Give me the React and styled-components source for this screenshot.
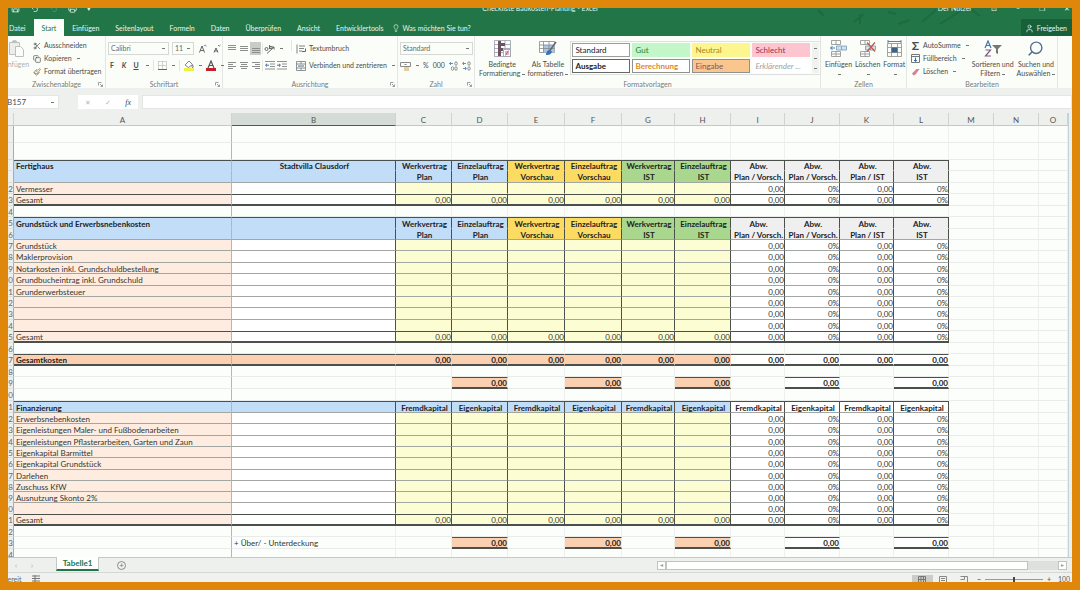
import styled, { createGlobalStyle, css } from 'styled-components'
import { Scissors, Copy, Paintbrush, Search, Lightbulb, User, Save, Undo2, Printer } from 'lucide-react'

const GlobalStyle = createGlobalStyle`
    * { box-sizing: border-box; }
    body { margin: 0; background: #df870a; font-family: Lato, "Open Sans", sans-serif; font-size: 7px; line-height: 9px; color: #4a4d4a; }
    button, input, select { font: inherit; color: inherit; }
`;

const Frame = styled.div`
    height: 100vh;
    padding: 8px;
`;

const Window = styled.div`
    height: 100%;
    display: flex;
    flex-direction: column;
    overflow: hidden;
    background: #edf0ec;
`;

// title bar + tabs

const Top = styled.header`
    position: relative;
    height: 28px;
    flex: none;
    background: #217547;
    color: #eaf5ee;
`;

const Doodle = styled.svg`
    position: absolute;
    right: 60px;
    top: 0;
    width: 200px;
    height: 20px;
    opacity: 0.25;
`;

const TitleBar = styled.div`
    position: relative;
    display: grid;
    grid-template-columns: 1fr 1fr 1fr;
    align-items: center;
    height: 20px;
    margin-top: -10px;
    svg { display: block; }
`;

const Quick = styled.div`
    display: flex;
    gap: 10px;
    padding-left: 3px;
`;

const Title = styled.div`
    text-align: center;
`;

const WinButtons = styled.div`
    display: flex;
    justify-content: flex-end;
    align-items: center;
    gap: 19px;
    padding-right: 2px;
`;

const PlainButton = styled.button`
    display: flex;
    align-items: center;
    gap: 3px;
    padding: 0;
    border: 0;
    background: none;
    white-space: nowrap;
    svg { display: block; flex: none; }
`;

const Tabs = styled.nav`
    position: relative;
    display: flex;
    height: 17px;
    margin-top: 1px;
`;

const Tab = styled.button`
    border: 0;
    padding: 1px 8px 0;
    background: ${({ $active }) => ($active ? '#fbfdf9' : 'none')};
    color: ${({ $active }) => ($active ? '#217547' : '#eaf5ee')};
    &:first-child { padding: 1px 8px 0 1px; }
`;

const Tell = styled(PlainButton)`
    padding-top: 1px;
`;

const Share = styled(PlainButton)`
    margin-left: auto;
    padding: 1px 5px 0 4px;
    background: #17603a;
`;

// ribbon

const Ribbon = styled.div`
    display: grid;
    grid-template-columns: 98px 117px 175px 77px 346px 86px 151px 1fr;
    height: 52px;
    flex: none;
    background: #fbfdf9;
`;

const Group = styled.section`
    display: flex;
    flex-direction: column;
    padding-top: 4px;
    border-right: 1px solid #e3e6e3;
    min-width: 0;
`;

const GroupBody = styled.div`
    flex: 1;
    display: flex;
    gap: ${({ $gap }) => $gap || 4}px;
    padding-left: ${({ $left }) => $left || 0}px;
`;

const GroupLabel = styled.div`
    position: relative;
    height: 8px;
    text-align: center;
    color: #777b78;
`;

const Launcher = styled.svg`
    position: absolute;
    right: 2px;
    top: 2px;
`;

const Stack = styled.div`
    display: flex;
    flex-direction: column;
    gap: 4px;
    padding-top: ${({ $top }) => $top || 0}px;
`;

const Line = styled.div`
    display: flex;
    align-items: center;
    height: 13px;
    gap: ${({ $gap }) => $gap || 5}px;
`;

const Split = styled.span`
    width: 1px;
    height: 11px;
    background: #e3e6e3;
`;

const BigButton = styled.button`
    display: flex;
    flex-direction: column;
    align-items: center;
    justify-content: flex-start;
    gap: 3px;
    padding: 0;
    border: 0;
    background: none;
    white-space: nowrap;
    opacity: ${({ $dim }) => ($dim ? 0.45 : 1)};
`;

const Paste = styled(BigButton)`
    width: 27px;
    margin-left: -6px;
`;

const Select = styled.select`
    appearance: none;
    width: ${({ $w }) => $w}px;
    height: 13px;
    padding: 0 2px;
    border: 1px solid #d5d8d5;
    border-radius: 0;
    background: #fbfdf9 linear-gradient(#777, #777) no-repeat right 3px center / 3px 1px;
    color: #666a67;
`;

const Letter = styled(PlainButton)`
    width: 8px;
    justify-content: center;
    font-weight: 700;
    font-style: ${({ $italic }) => ($italic ? 'italic' : 'normal')};
    text-decoration: ${({ $under }) => ($under ? 'underline' : 'none')};
`;

const IconSlot = styled.button`
    display: grid;
    place-items: center;
    width: 11px;
    height: 13px;
    padding: 0;
    border: 0;
    background: ${({ $on }) => ($on ? '#c9ccc9' : 'none')};
`;

const Caret = styled.i`
    display: inline-block;
    flex: none;
    width: 3px;
    height: 1px;
    margin-left: 2px;
    vertical-align: middle;
    background: #777;
`;

const Sigma = styled.b`
    width: 9px;
    font-size: 12px;
    line-height: 9px;
`;

const Gallery = styled.div`
    display: grid;
    grid-template-columns: repeat(4, 58px) 7px;
    grid-template-rows: 14px 14px;
    gap: 2px;
    height: 34px;
    padding: 1px;
    border: 1px solid #dde0dd;
    margin-top: 1px;
`;

const Style = styled.button`
    padding: 0 2px;
    text-align: left;
    font-size: 8px;
    border: 1px solid ${({ $line }) => $line || 'transparent'};
    background: ${({ $bg }) => $bg || '#fff'};
    color: ${({ $ink }) => $ink || '#222'};
    font-weight: ${({ $bold }) => ($bold ? 700 : 400)};
    font-style: ${({ $italic }) => ($italic ? 'italic' : 'normal')};
`;

const GalleryScroll = styled.div`
    grid-column: 5;
    grid-row: 1 / 3;
    display: grid;
    place-items: center;
    background: #f0f2ef;
    i { margin: 0; }
`;

// formula bar

const FormulaBar = styled.div`
    display: flex;
    height: 25px;
    padding: 7px 0 4px;
    flex: none;
    background: #edf0ec;
`;

const NameBox = styled.input`
    width: 54px;
    margin-left: -3px;
    padding: 0 1px;
    border: 1px solid #e3e6e3;
    background: #fff linear-gradient(#777, #777) no-repeat right 4px center / 3px 1px;
    font-size: 8px;
`;

const FxButtons = styled.div`
    display: flex;
    align-items: center;
    justify-content: space-around;
    width: 60px;
    margin: 0 4px 0 19px;
    background: #fff;
    color: #b5b8b5;
    em { font-family: "Liberation Serif", serif; font-size: 8px; color: #444; }
`;

const FormulaInput = styled.input`
    flex: 1;
    min-width: 0;
    border: 1px solid #e3e6e3;
    background: #fff;
`;

// sheet

const Sheet = styled.main`
    flex: 1;
    min-height: 0;
    overflow: hidden;
    margin-right: 3px;
    border-right: 1px solid #bcd5de;
    background: #fcfefb;
`;

const Table = styled.table`
    width: 100%;
    table-layout: fixed;
    border-collapse: separate;
    border-spacing: 0;
    font-size: 8px;
    line-height: 7px;
    color: #333633;
`;

const ColHead = styled.th`
    height: 13px;
    padding: 2px 0 0;
    font-weight: 400;
    color: #555;
    background: ${({ $on }) => ($on ? '#d5dbd5' : '#edf0ec')};
    border-right: 1px solid #cfd3cf;
    border-bottom: 1px solid ${({ $on }) => ($on ? '#217547' : '#c5c9c5')};
`;

const RowHead = styled.th`
    padding: 2px 0 0;
    font-weight: 400;
    text-align: right;
    color: #666;
    background: #edf0ec;
    border-right: 1px solid #a9ada9;
    border-bottom: 1px solid #dde0dd;
`;

const Cell = styled.td`
    padding: 2px 0 0 2px;
    white-space: nowrap;
    text-align: ${({ $align }) => $align || 'left'};
    font-weight: ${({ $bold }) => ($bold ? 700 : 400)};
    color: ${({ $bold }) => ($bold ? '#1c221f' : 'inherit')};
    background: ${({ $bg }) => $bg || 'transparent'};
    border-right: 1px solid ${({ $right }) => $right || '#edf0ec'};
    ${({ $top }) => $top && css`border-top: 1px solid ${$top};`}
    border-bottom: ${({ $thick }) => ($thick ? '2px' : '1px')} solid ${({ $bottom }) => $bottom || '#e9ece8'};
`;

// bottom bars

const SheetBar = styled.footer`
    display: flex;
    align-items: center;
    height: 16px;
    flex: none;
    border-top: 1px solid #c5c9c5;
    border-bottom: 1px solid #d5d8d5;
    background: #edf0ec;
    color: #9a9e9a;
    padding: 0 5px 0 7px;
`;

const Arrow = styled.button`
    width: 16px;
    padding: 0;
    border: 0;
    background: none;
    text-align: left;
`;

const SheetTab = styled.button`
    align-self: stretch;
    width: 43px;
    margin: -1px 18px 1px 9px;
    padding: 0;
    border: 1px solid #c5c9c5;
    border-top: 0;
    border-bottom: 2px solid #217547;
    background: #fff;
    color: #217547;
    font-weight: 700;
    font-size: 8px;
`;

const AddButton = styled.button`
    width: 9px;
    height: 9px;
    padding: 0;
    border: 1px solid #8a8e8a;
    border-radius: 50%;
    background: none;
    line-height: 6px;
    color: #666;
`;

const Scroller = styled.div`
    display: flex;
    align-items: stretch;
    width: 410px;
    height: 9px;
    margin-left: auto;
    background: #dde0dd;
`;

const ScrollButton = styled.button`
    width: 9px;
    padding: 0;
    border: 1px solid #c0c4c0;
    background: #fff;
    font-size: 6px;
    line-height: 6px;
`;

const Thumb = styled.div`
    flex: 1;
    margin-right: 30px;
    border: 1px solid #c0c4c0;
    background: #fff;
`;

const Status = styled.div`
    display: flex;
    align-items: center;
    height: 9px;
    flex: none;
    padding-top: 3px;
    background: #f0f2ef;
    color: #666;
    overflow: hidden;
    white-space: nowrap;
`;

const StatusText = styled.span`
    margin: 0 11px 0 -5px;
`;

const Views = styled.div`
    display: flex;
    margin-left: auto;
`;

const ViewButton = styled.button`
    display: grid;
    place-items: center;
    width: 21px;
    height: 8px;
    padding: 0;
    border: 0;
    background: ${({ $on }) => ($on ? '#c9ccc9' : 'none')};
`;

const Zoom = styled.label`
    display: flex;
    align-items: center;
    gap: 4px;
    margin-left: 2px;
    font-weight: 700;
    input {
        appearance: none;
        width: 58px;
        height: 5px;
        margin: 0;
        background: linear-gradient(#999, #999) no-repeat center / 100% 1px;
    }
    input::-webkit-slider-thumb {
        appearance: none;
        width: 2px;
        height: 5px;
        background: #444;
    }
    span { margin-left: 3px; font-weight: 400; width: 14px; }
`;

const Bars = ({ rows = [9, 6, 9], align = 'left', y = 2 }) => (
    <svg width="10" height="10">
        {rows.map((w, i) => (
            <rect key={i} x={align === 'left' ? 1 : align === 'right' ? 9 - w : (10 - w) / 2} y={y + i * 2} width={w} height="1" fill="#8b8f8c" />
        ))}
    </svg>
);

const Indent = ({ flip }) => (
    <svg width="10" height="9" viewBox="0 0 10 9" fill="none" stroke="#777">
        <path d="M0 .5h10M5 3h5M5 5.500h5M0 8h10" strokeWidth=".8" />
        <path d={flip ? 'M0 4.200h3M2 2.800l1.500 1.400L2 5.600' : 'M4 4.200H1M2 2.800L.5 4.200L2 5.600'} stroke="#3f6f9f" />
    </svg>
);

const Clipboard = () => (
    <svg width="16" height="17" viewBox="0 0 16 17" fill="#ddd" stroke="#777">
        <path d="M1.500 2.500h10v12h-10z" />
        <path d="M4 2.500q0-2 2.500-2t2.500 2z" fill="#777" />
        <path d="M7.500 6.500h5l3 3v7h-8z" fill="#fff" />
    </svg>
);

const WrapIcon = ({ merge }) => (
    <svg width="10" height="10" viewBox="0 0 10 10" fill="none" stroke="#777">
        {merge ? <path d="M.5.5h9v9h-9zM.5 3h9M.5 7h9M5 .5V3M5 7v2.500" strokeWidth=".8" /> : <path d="M1 .5v9M3 2h6M3 4.500h5M3 7h3" strokeWidth=".9" />}
        <path d={merge ? 'M2 5h6' : 'M9.500 4.500v3H6'} stroke="#3f6f9f" />
    </svg>
);

const CondIcon = () => (
    <svg width="17" height="17" viewBox="0 0 17 17" fill="none" stroke="#99a" strokeWidth=".8">
        <path d="M.5.5h16v16H.5zM.5 4.500h16M.5 8.500h16M.5 12.500h16M5.500.5v16M11 .5v16" />
        <path d="M4 1h3v15H4zM7 3h4v3H7zM7 8h2v3H7z" fill="#6d5264" stroke="none" />
        <path d="M9.500 9.500h7v7h-7z" fill="#fff" />
        <path d="M11 12h4M11 14h4M14.500 10.500l-3 5" stroke="#a4505e" />
    </svg>
);

const TableIcon = () => (
    <svg width="18" height="17" viewBox="0 0 18 17" fill="none" stroke="#87898c" strokeWidth=".8">
        <path d="M.5 1.500h15v11H.5z" fill="#fff" />
        <path d="M4.500 5h11v7.500h-11z" fill="#a9c5e4" stroke="none" />
        <path d="M.5 5h15M.5 8.500h15M4.500 1.500v11M10 1.500v11" />
        <path d="M17 2l-6.500 9" stroke="#667" strokeWidth="1.500" />
        <path d="M10.500 10q-3.500.5-3.500 5q5 .5 6-3.500z" fill="#3674b5" stroke="none" />
    </svg>
);

const CellsIcon = ({ kind }) => (
    <svg width="17" height="17" viewBox="0 0 17 17" fill="none" stroke="#999" strokeWidth=".9">
        {kind === 'format' ? (
            <>
                <path d="M1.500 3.500h14v13h-14zM1.500 7.500h14M1.500 12.500h14M5.500 3.500v13M11.500 3.500v13" />
                <path d="M2 1.500h13M2 0v3M15 0v3" stroke="#3f76ad" />
                <path d="M5.500 7.500h6v5h-6z" fill="#3f6288" stroke="none" />
            </>
        ) : (
            <>
                <path d="M1.500.5h9v4h-9zM6 .5v4M1.500 11.500h9v5h-9zM6 11.500v5M1.500 14h9" />
                <path d="M6.500 6h10v4h-10zM11.500 6v4" fill="#d3e2f0" stroke="#7fa0c2" />
                {kind === 'insert' ? <path d="M5 8H.5M2.500 6L.5 8l2 2" stroke="#2d6cb0" /> : <path d="M8 2.500l8 9M16 2.500l-8 9" stroke="#c4573f" strokeWidth="1.200" />}
            </>
        )}
    </svg>
);

const SortIcon = () => (
    <svg width="18" height="17" viewBox="0 0 18 17">
        <path d="M1 8L4 1l3 7M2 5.500h4" fill="none" stroke="#3f76ad" strokeWidth="1.200" />
        <path d="M1.500 10h5L1.500 16h5.500" fill="none" stroke="#7d5a86" strokeWidth="1.200" />
        <path d="M8 5h10l-4 4v5l-2-1V9z" fill="#777" />
    </svg>
);

const FillIcon = () => (
    <svg width="9" height="9" viewBox="0 0 9 9" fill="none" stroke="#777">
        <path d="M.5.5h8v8h-8zM.5 2.500h8" />
        <path d="M4.500 3.500v4M3 6l1.500 1.500L6 6" stroke="#2d6cb0" />
    </svg>
);

const Eraser = () => (
    <svg width="9" height="8" viewBox="0 0 9 8"><path d="M1 5.500L5.500 1h3L4.500 6.500L2.500 7.500z" fill="#dd7d93" /></svg>
);

const BucketIcon = ({ font }) => (
    <svg width="10" height="11" viewBox="0 0 10 11">
        {font ? <path d="M2 8l3-7l3 7M3 5.500h4" fill="none" stroke="#555" strokeWidth="1.200" /> : <path d="M1 5L5 1l3.500 3.500L4.500 7.500zM8.500 5q1.500 2 .5 2.500t-1-1z" fill="#fff" stroke="#777" strokeWidth=".9" />}
        <rect x="0" y="8" width="10" height="3" fill={font ? '#c4202c' : '#eef04a'} />
    </svg>
);

const OrientIcon = () => (
    <svg width="11" height="10" viewBox="0 0 11 10" fill="none" stroke="#666">
        <path d="M3 9.500L10 3M7.500 3H10v2.500" />
        <circle cx="2.500" cy="5" r="1.500" />
        <path d="M5.500 1v4" />
        <circle cx="7" cy="3.500" r="1.200" />
    </svg>
);

const MoneyIcon = () => (
    <svg width="11" height="10" viewBox="0 0 11 10" fill="none" stroke="#888">
        <path d="M.5 1.500h10v4H.5zM4.500 3.500h2" />
        <path d="M4 7h5M4 9h5" stroke="#c9a24a" />
    </svg>
);

const DecimalIcon = ({ less }) => (
    <svg width="9" height="10" viewBox="0 0 9 10" fill="none" stroke="#777" strokeWidth=".8">
        <path d={less ? 'M1 2.500h3M2 1L.5 2.500L2 4' : 'M4 2.500H.5M2 1L.5 2.500L2 4'} stroke="#3f76ad" />
        <ellipse cx="7" cy="2.500" rx="1.200" ry="1.800" />
        <ellipse cx="7" cy="7.500" rx="1.200" ry="1.800" />
        {less ? <path d="M1 7.500h3M3 6l1.500 1.500L3 9" stroke="#3f76ad" /> : <ellipse cx="3.500" cy="7.500" rx="1.200" ry="1.800" />}
    </svg>
);

const BorderIcon = () => (
    <svg width="9" height="9" viewBox="0 0 9 9" fill="none" stroke="#aaa">
        <path d="M.5.5h8v8M.5.5v8M4.500.5v8M.5 4.500h8" strokeDasharray="1 1" />
        <path d="M0 8.500h9" stroke="#666" />
    </svg>
);

const SizeIcon = ({ small }) => (
    <svg width="8" height="9" viewBox="0 0 8 9" fill="none" stroke="#555" strokeWidth=".9">
        <path d={small ? 'M1 8.500L3 4l2 4.500M1.500 7h3' : 'M.5 8.500L3 2l2.500 6.500M1.500 6.500h3'} />
        <path d={small ? 'M5 1l1.200 1.200L7.500 1' : 'M5 2.200L6.200 1L7.500 2.200'} stroke="#3f76ad" />
    </svg>
);

const LaunchIcon = () => (
    <Launcher width="5" height="5" viewBox="0 0 5 5" fill="none" stroke="#888" strokeWidth=".8">
        <path d="M.5 3.500v-3h3M2 2l2.500 2.500M4.500 2.500v2h-2" />
    </Launcher>
);

const styles = [
    { label: 'Standard', $line: '#9b9e9b' },
    { label: 'Gut', $bg: '#c3f7c9', $ink: '#24803a' },
    { label: 'Neutral', $bg: '#fdf68e', $ink: '#a8862a' },
    { label: 'Schlecht', $bg: '#fcc5cf', $ink: '#a0304a' },
    { label: 'Ausgabe', $line: '#666966', $bold: true },
    { label: 'Berechnung', $line: '#8f928f', $ink: '#e0882c', $bold: true },
    { label: 'Eingabe', $bg: '#fbc58e', $line: '#8f928f', $ink: '#7a5a5a' },
    { label: 'Erklärender ...', $ink: '#a0a3a0', $italic: true },
];

const cols = [
    ['A', 218], ['B', 164], ['C', 56], ['D', 56], ['E', 57], ['F', 57], ['G', 53], ['H', 56],
    ['I', 54], ['J', 55], ['K', 54], ['L', 55], ['M', 45], ['N', 45], ['O'],
];

const BLUE = '#c1ddf7';
const PEACH = '#fdecdf';
const ORANGE = '#fbd0b0';
const LEMON = '#fdfdd4';
const DARK = '#4b504c';
const GREY = '#a3a7a2';

const planHead = ['Werkvertrag', 'Einzelauftrag', 'Werkvertrag', 'Einzelauftrag', 'Werkvertrag', 'Einzelauftrag', 'Abw.', 'Abw.', 'Abw.', 'Abw.'];
const planSub = ['Plan', 'Plan', 'Vorschau', 'Vorschau', 'IST', 'IST', 'Plan / Vorsch.', 'Plan / Vorsch.', 'Plan / IST', 'IST'];
const planBg = ['#c1ddf7', '#c1ddf7', '#fcdb62', '#fcdb62', '#a9d78e', '#a9d78e', '#efefef', '#efefef', '#efefef', '#efefef'];
const finHead = ['Fremdkapital', 'Eigenkapital', 'Fremdkapital', 'Eigenkapital', 'Fremdkapital', 'Eigenkapital', 'Fremdkapital', 'Eigenkapital', 'Fremdkapital', 'Eigenkapital'];

const rows = [
    ['', 17, 'blank'],
    ['', 17, 'blank'],
    ['', 11, 'head', 'Fertighaus', 'Stadtvilla Clausdorf'],
    ['', 12, 'sub'],
    ['2', 11, 'last', 'Vermesser'],
    ['3', 12, 'total', 'Gesamt'],
    ['4', 11, 'blank'],
    ['5', 12, 'head', 'Grundstück und Erwerbsnebenkosten'],
    ['6', 11, 'sub'],
    ['7', 11, 'item', 'Grundstück'],
    ['8', 12, 'item', 'Maklerprovision'],
    ['9', 11, 'item', 'Notarkosten inkl. Grundschuldbestellung'],
    ['0', 12, 'item', 'Grundbucheintrag inkl. Grundschuld'],
    ['1', 11, 'item', 'Grunderwerbsteuer'],
    ['2', 11, 'item'],
    ['3', 12, 'item'],
    ['4', 11, 'last'],
    ['5', 12, 'total', 'Gesamt'],
    ['6', 11, 'blank'],
    ['7', 12, 'grand', 'Gesamtkosten'],
    ['8', 11, 'blank'],
    ['9', 12, 'sum'],
    ['0', 12, 'blank'],
    ['1', 12, 'fin', 'Finanzierung'],
    ['2', 11, 'item', 'Erwerbsnebenkosten'],
    ['3', 12, 'item', 'Eigenleistungen Maler- und Fußbodenarbeiten'],
    ['4', 11, 'item', 'Eigenleistungen Pflasterarbeiten, Garten und Zaun'],
    ['5', 11, 'item', 'Eigenkapital Barmittel'],
    ['6', 12, 'item', 'Eigenkapital Grundstück'],
    ['7', 11, 'item', 'Darlehen'],
    ['8', 11, 'item', 'Zuschuss KfW'],
    ['9', 11, 'item', 'Ausnutzung Skonto 2%'],
    ['0', 11, 'last'],
    ['1', 12, 'total', 'Gesamt'],
    ['2', 11, 'blank'],
    ['3', 12, 'sum', '', '+ Über/ - Unterdeckung'],
    ['4', 12, 'blank'],
];

const lines = {
    head: { $top: DARK, $bottom: 'transparent' },
    sub: { $bottom: GREY },
    fin: { $top: DARK, $bottom: GREY },
    item: { $bottom: GREY },
    last: { $bottom: 'transparent' },
    total: { $top: DARK, $bottom: DARK, $thick: true },
    grand: { $top: DARK, $bottom: DARK, $thick: true },
};

// style and text of one of the value columns C to L
const valueCell = (type, i) => {
    const money = i < 6 || i % 2 === 0 ? '0,00' : '0%';
    const left = i < 6;
    const base = lines[type];
    switch (type) {
        case 'head': return { ...base, text: planHead[i], $bg: planBg[i], $right: DARK, $align: 'center', $bold: true };
        case 'sub': return { ...base, text: planSub[i], $bg: planBg[i], $right: DARK, $align: 'center', $bold: true };
        case 'fin': return { ...base, text: finHead[i], $bg: left ? BLUE : '#fff', $right: DARK, $align: 'center', $bold: true };
        case 'item':
        case 'last': return { ...base, text: left ? '' : money, $bg: left ? LEMON : '#fff', $right: DARK, $align: 'right' };
        case 'total': return { ...base, text: money, $bg: left ? LEMON : '#fff', $right: DARK, $align: 'right' };
        case 'grand': return { ...base, text: '0,00', $bg: left ? ORANGE : '#fff', $right: left ? ORANGE : '#fff', $align: 'right', $bold: true };
        case 'sum': return i % 2 ? { text: '0,00', $bg: left ? ORANGE : '#fff', $top: DARK, $bottom: DARK, $thick: true, $align: 'right', $bold: true } : {};
        default: return {};
    }
};

const Row = ({ row: [num, height, type, name, note] }) => {
    const blue = ['head', 'sub', 'fin'].includes(type);
    const peach = ['item', 'last', 'total'].includes(type);
    const bg = blue ? BLUE : peach ? PEACH : type === 'grand' ? ORANGE : undefined;
    const bold = blue || type === 'grand';
    return (
        <tr style={{ height }}>
            <RowHead scope="row">{num}</RowHead>
            <Cell {...lines[type]} $bg={bg} $bold={bold} $right="#b4b8b4">{name}</Cell>
            <Cell {...lines[type]} $bg={peach ? '#fff' : bg} $bold={bold} $right={peach || blue ? DARK : bg} $align={bold ? 'center' : 'left'}>{note}</Cell>
            {planHead.map((_, i) => {
                const { text, ...look } = valueCell(type, i);
                return <Cell key={i} {...look}>{text}</Cell>;
            })}
            <Cell />
            <Cell />
            <Cell />
        </tr>
    );
};

const App = () => {
    return (
        <Frame>
            <GlobalStyle />
            <Window>
                <Top>
                    <Doodle viewBox="0 0 200 20" fill="none" stroke="#10502c" strokeWidth="2">
                        <path d="M6 2l6 6M42 14l10-8M48 6v10M76 4l8 2M86 16l12-4M110 14l14-12M128 16l22-14M160 2l8 6" />
                    </Doodle>
                    <TitleBar>
                        <Quick>
                            <Save size={9} /><Undo2 size={9} /><Undo2 size={9} opacity={0.3} /><Printer size={9} /><span>▾</span>
                        </Quick>
                        <Title>Checkliste Baukosten-Planung - Excel</Title>
                        <WinButtons>
                            <span>Der Nutzer</span><span>⊡</span><span>–</span><span>❐</span><span>✕</span>
                        </WinButtons>
                    </TitleBar>
                    <Tabs>
                        {['Datei', 'Start', 'Einfügen', 'Seitenlayout', 'Formeln', 'Daten', 'Überprüfen', 'Ansicht', 'Entwicklertools'].map((tab) => (
                            <Tab key={tab} $active={tab === 'Start'}>{tab}</Tab>
                        ))}
                        <Tell><Lightbulb size={8} /> Was möchten Sie tun?</Tell>
                        <Share><User size={9} /> Freigeben</Share>
                    </Tabs>
                </Top>

                <Ribbon>
                    <Group>
                        <GroupBody $gap={4}>
                            <Paste $dim><Clipboard />Einfügen</Paste>
                            <Stack $top={1}>
                                <PlainButton><Scissors size={8} />Ausschneiden</PlainButton>
                                <PlainButton><Copy size={8} />Kopieren <Caret /></PlainButton>
                                <PlainButton><Paintbrush size={8} color="#8a6a2a" />Format übertragen</PlainButton>
                            </Stack>
                        </GroupBody>
                        <GroupLabel>Zwischenablage<LaunchIcon /></GroupLabel>
                    </Group>
                    <Group>
                        <GroupBody $left={2}>
                            <Stack $top={2}>
                                <Line $gap={3}>
                                    <Select $w={61} aria-label="Schriftart"><option>Calibri</option></Select>
                                    <Select $w={22} aria-label="Schriftgrad"><option>11</option></Select>
                                    <IconSlot aria-label="Schrift vergrößern"><SizeIcon /></IconSlot>
                                    <IconSlot aria-label="Schrift verkleinern"><SizeIcon small /></IconSlot>
                                </Line>
                                <Line $gap={4}>
                                    <Letter>F</Letter>
                                    <Letter $italic>K</Letter>
                                    <Letter $under>U</Letter>
                                    <Caret />
                                    <Split />
                                    <PlainButton aria-label="Rahmen"><BorderIcon /><Caret /></PlainButton>
                                    <Split />
                                    <PlainButton aria-label="Füllfarbe"><BucketIcon /><Caret /></PlainButton>
                                    <PlainButton aria-label="Schriftfarbe"><BucketIcon font /><Caret /></PlainButton>
                                </Line>
                            </Stack>
                        </GroupBody>
                        <GroupLabel>Schriftart<LaunchIcon /></GroupLabel>
                    </Group>
                    <Group>
                        <GroupBody $left={3} $gap={4}>
                            <Stack $top={2}>
                                <Line $gap={1}>
                                    <IconSlot aria-label="Oben"><Bars y={1} rows={[8, 8, 8]} /></IconSlot>
                                    <IconSlot aria-label="Mitte"><Bars rows={[8, 8, 8]} /></IconSlot>
                                    <IconSlot aria-label="Unten" $on><Bars y={4} rows={[8, 8, 8]} /></IconSlot>
                                    <Split />
                                    <PlainButton aria-label="Ausrichtung"><OrientIcon /><Caret /></PlainButton>
                                </Line>
                                <Line $gap={1}>
                                    <IconSlot aria-label="Links"><Bars rows={[8, 5, 8, 5]} y={1} /></IconSlot>
                                    <IconSlot aria-label="Zentriert"><Bars rows={[8, 6, 8, 6]} y={1} align="center" /></IconSlot>
                                    <IconSlot aria-label="Rechts"><Bars rows={[8, 5, 8, 5]} y={1} align="right" /></IconSlot>
                                    <Split />
                                    <IconSlot aria-label="Einzug verkleinern"><Indent /></IconSlot>
                                    <IconSlot aria-label="Einzug vergrößern"><Indent flip /></IconSlot>
                                </Line>
                            </Stack>
                            <Split />
                            <Stack $top={2}>
                                <Line><PlainButton><WrapIcon />Textumbruch</PlainButton></Line>
                                <Line><PlainButton><WrapIcon merge />Verbinden und zentrieren <Caret /></PlainButton></Line>
                            </Stack>
                        </GroupBody>
                        <GroupLabel>Ausrichtung<LaunchIcon /></GroupLabel>
                    </Group>
                    <Group>
                        <GroupBody $left={2}>
                            <Stack $top={2}>
                                <Line><Select $w={73} aria-label="Zahlenformat"><option>Standard</option></Select></Line>
                                <Line $gap={4}>
                                    <PlainButton aria-label="Währung"><MoneyIcon /><Caret /></PlainButton>
                                    <PlainButton>%</PlainButton>
                                    <PlainButton>000</PlainButton>
                                    <PlainButton aria-label="Dezimalstelle hinzufügen"><DecimalIcon /></PlainButton>
                                    <PlainButton aria-label="Dezimalstelle entfernen"><DecimalIcon less /></PlainButton>
                                </Line>
                            </Stack>
                        </GroupBody>
                        <GroupLabel>Zahl<LaunchIcon /></GroupLabel>
                    </Group>
                    <Group>
                        <GroupBody $left={4} $gap={2}>
                            <BigButton><CondIcon /><span>Bedingte<br />Formatierung<Caret /></span></BigButton>
                            <BigButton><TableIcon /><span>Als Tabelle<br />formatieren<Caret /></span></BigButton>
                            <Gallery>
                                {styles.map(({ label, ...look }) => <Style key={label} {...look}>{label}</Style>)}
                                <GalleryScroll><Caret /><Caret /><Caret /></GalleryScroll>
                            </Gallery>
                        </GroupBody>
                        <GroupLabel>Formatvorlagen</GroupLabel>
                    </Group>
                    <Group>
                        <GroupBody $left={4} $gap={3}>
                            <BigButton><CellsIcon kind="insert" /><span>Einfügen<br /><Caret /></span></BigButton>
                            <BigButton><CellsIcon kind="delete" /><span>Löschen<br /><Caret /></span></BigButton>
                            <BigButton><CellsIcon kind="format" /><span>Format<br /><Caret /></span></BigButton>
                        </GroupBody>
                        <GroupLabel>Zellen</GroupLabel>
                    </Group>
                    <Group>
                        <GroupBody $left={4} $gap={3}>
                            <Stack $top={1}>
                                <PlainButton><Sigma>Σ</Sigma>AutoSumme<Caret /></PlainButton>
                                <PlainButton><FillIcon />Füllbereich<Caret /></PlainButton>
                                <PlainButton><Eraser />Löschen<Caret /></PlainButton>
                            </Stack>
                            <BigButton><SortIcon /><span>Sortieren und<br />Filtern<Caret /></span></BigButton>
                            <BigButton><Search size={17} strokeWidth={2} color="#55708c" transform="scale(-1 1)" /><span>Suchen und<br />Auswählen<Caret /></span></BigButton>
                        </GroupBody>
                        <GroupLabel>Bearbeiten</GroupLabel>
                    </Group>
                </Ribbon>

                <FormulaBar>
                    <NameBox aria-label="Namenfeld" defaultValue="B157" />
                    <FxButtons><span>✕</span><span>✓</span><em>fx</em></FxButtons>
                    <FormulaInput aria-label="Bearbeitungsleiste" />
                </FormulaBar>

                <Sheet>
                    <Table>
                        <colgroup>
                            <col width="6" />
                            {cols.map(([name, width]) => <col key={name} width={width} />)}
                        </colgroup>
                        <thead>
                            <tr>
                                <ColHead />
                                {cols.map(([name]) => <ColHead key={name} scope="col" $on={name === 'B'}>{name}</ColHead>)}
                            </tr>
                        </thead>
                        <tbody>
                            {rows.map((row, i) => <Row key={i} row={row} />)}
                        </tbody>
                    </Table>
                </Sheet>

                <SheetBar>
                    <Arrow aria-label="Vorheriges Blatt">‹</Arrow>
                    <Arrow aria-label="Nächstes Blatt">›</Arrow>
                    <SheetTab>Tabelle1</SheetTab>
                    <AddButton aria-label="Neues Blatt">+</AddButton>
                    <Scroller>
                        <ScrollButton aria-label="Nach links">◂</ScrollButton>
                        <Thumb />
                        <ScrollButton aria-label="Nach rechts">▸</ScrollButton>
                    </Scroller>
                </SheetBar>
                <Status>
                    <StatusText>Bereit</StatusText>
                    <svg width="9" height="8"><path d="M0 1h8M0 3.500h8M0 6h8M3 0v7" stroke="#777" /></svg>
                    <Views>
                        <ViewButton $on aria-label="Normal"><svg width="8" height="7" fill="none" stroke="#777"><path d="M.5.5h7v6h-7zM.5 3.500h7M3 .5v6M5.500.5v6" /></svg></ViewButton>
                        <ViewButton aria-label="Seitenlayout"><svg width="8" height="7" fill="none" stroke="#888"><path d="M.5.5h7v6h-7zM2 2.500h4M2 4.500h4" /></svg></ViewButton>
                        <ViewButton aria-label="Umbruchvorschau"><svg width="8" height="7" fill="none" stroke="#888"><path d="M.5.5h7v6h-7M4.500.5v3h-4" /></svg></ViewButton>
                    </Views>
                    <Zoom>
                        −<input type="range" min="0" max="100" defaultValue="50" aria-label="Zoom" />+<span>100 %</span>
                    </Zoom>
                </Status>
            </Window>
        </Frame>
    )
}

export default App
